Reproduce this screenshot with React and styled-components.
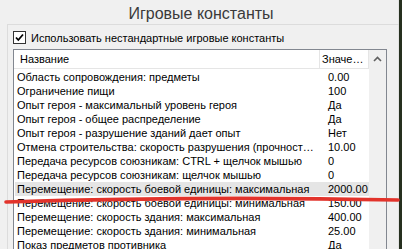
import React from 'react';
import styled, { createGlobalStyle } from 'styled-components';

const rows = [
  { name: 'Область сопровождения: предметы', value: '0.00' },
  { name: 'Ограничение пищи', value: '100' },
  { name: 'Опыт героя - максимальный уровень героя', value: 'Да' },
  { name: 'Опыт героя - общее распределение', value: 'Да' },
  { name: 'Опыт героя - разрушение зданий дает опыт', value: 'Нет' },
  { name: 'Отмена строительства: скорость разрушения (прочность здания)', value: '10.00' },
  { name: 'Передача ресурсов союзникам: CTRL + щелчок мышью', value: '0' },
  { name: 'Передача ресурсов союзникам: щелчок мышью', value: '0' },
  { name: 'Перемещение: скорость боевой единицы: максимальная', value: '2000.00', selected: true },
  { name: 'Перемещение: скорость боевой единицы: минимальная', value: '150.00' },
  { name: 'Перемещение: скорость здания: максимальная', value: '400.00' },
  { name: 'Перемещение: скорость здания: минимальная', value: '25.00' },
  { name: 'Показ предметов противника', value: 'Да' },
];

const GlobalStyle = createGlobalStyle`
  html, body {
    margin: 0;
    padding: 0;
    background: #f0f0f0;
  }
  body {
    font-family: "Liberation Sans", Arial, sans-serif;
    font-size: 11px;
    color: #000;
  }
`;

const App = () => {
  return (
    <>
      <GlobalStyle />
      <Window>
        <Main>
          <Title>Игровые константы</Title>
          <GroupBox>
            <CheckRow>
              <CheckBox>
                <svg width="11" height="11" viewBox="0 0 11 11">
                  <path d="M2 5.5 L4.3 8 L9 2.5" fill="none" stroke="#000" strokeWidth="1.8" />
                </svg>
              </CheckBox>
              <CheckLabel>Использовать нестандартные игровые константы</CheckLabel>
            </CheckRow>
            <ListView>
              <Columns>
                <Header>
                  <HeaderCell $width={306} $pad={6}>Название</HeaderCell>
                  <HeaderCell $width={49} $pad={2}>Значение</HeaderCell>
                </Header>
                <Rows>
                  {rows.map(row => (
                    <Row key={row.name} $selected={row.selected}>
                      <NameCell>{row.name}</NameCell>
                      <ValueCell>{row.value}</ValueCell>
                    </Row>
                  ))}
                </Rows>
              </Columns>
              <ScrollBar>
                <ScrollArrow>
                  <svg width="9" height="6" viewBox="0 0 9 6">
                    <path d="M1 5 L4.5 1.5 L8 5" fill="none" stroke="#606060" strokeWidth="1.6" />
                  </svg>
                </ScrollArrow>
              </ScrollBar>
            </ListView>
          </GroupBox>
        </Main>
        <WindowEdge />
        <Annotation width="402" height="249" viewBox="0 0 402 249">
          <path
            d="M6 202 Q200 196 398 200"
            fill="none"
            stroke="#e2332b"
            strokeWidth="3.6"
            strokeLinecap="round"
          />
        </Annotation>
      </Window>
    </>
  );
};

export default App;

const Window = styled.div`
  position: relative;
  display: flex;
  width: 402px;
  height: 249px;
  overflow: hidden;
  background: #f0f0f0;
`;

const Main = styled.div`
  width: 398px;
  display: flex;
  flex-direction: column;
  border-right: 1px solid #e3e3e3;
`;

const WindowEdge = styled.div`
  flex: 1;
  background: #26301f;
`;

const Title = styled.div`
  height: 27px;
  padding: 4px 0 0 4px;
  box-sizing: border-box;
  text-align: center;
  font-size: 16px;
  line-height: 20px;
  color: #3a3a3a;
`;

const GroupBox = styled.div`
  margin-left: 7px;
  width: 386px;
  flex: 1;
  border: 1px solid #dcdcdc;
  border-bottom: none;
  padding: 6px 5px 0 5px;
  display: flex;
  flex-direction: column;
`;

const CheckRow = styled.div`
  display: flex;
  align-items: center;
  height: 13px;
`;

const CheckBox = styled.div`
  width: 11px;
  height: 11px;
  border: 1px solid #333;
  background: #fff;
  display: flex;
  align-items: center;
  justify-content: center;
`;

const CheckLabel = styled.span`
  margin-left: 5px;
  line-height: 13px;
  padding-top: 1px;
  white-space: nowrap;
`;

const ListView = styled.div`
  margin-top: 5px;
  width: 372px;
  flex: 1;
  border: 1px solid #828790;
  border-bottom: none;
  background: #fff;
  display: flex;
`;

const Columns = styled.div`
  width: 355px;
  display: flex;
  flex-direction: column;
`;

const Header = styled.div`
  display: flex;
  height: 18px;
  border-bottom: 1px solid #e5e5e5;
`;

const HeaderCell = styled.div`
  width: ${props => props.$width}px;
  padding-left: ${props => props.$pad}px;
  padding-right: 2px;
  box-sizing: border-box;
  border-right: 1px solid #e5e5e5;
  line-height: 19px;
  white-space: nowrap;
  overflow: hidden;
  text-overflow: ellipsis;
`;

const Rows = styled.div`
  padding-top: 1px;
  display: flex;
  flex-direction: column;
`;

const Row = styled.div`
  display: flex;
  height: 14px;
  line-height: 15px;
  margin-left: 1px;
  background: ${props => (props.$selected ? '#e5e5e5' : 'transparent')};
`;

const NameCell = styled.div`
  width: 305px;
  padding: 0 4px 0 2px;
  box-sizing: border-box;
  white-space: nowrap;
  overflow: hidden;
  text-overflow: ellipsis;
`;

const ValueCell = styled.div`
  flex: 1;
  padding-left: 8px;
  white-space: nowrap;
  overflow: hidden;
`;

const ScrollBar = styled.div`
  width: 17px;
  background: #f0f0f0;
  display: flex;
  flex-direction: column;
`;

const ScrollArrow = styled.div`
  height: 17px;
  display: flex;
  align-items: center;
  justify-content: center;
`;

const Annotation = styled.svg`
  position: absolute;
  left: 0;
  top: 0;
  pointer-events: none;
`;
